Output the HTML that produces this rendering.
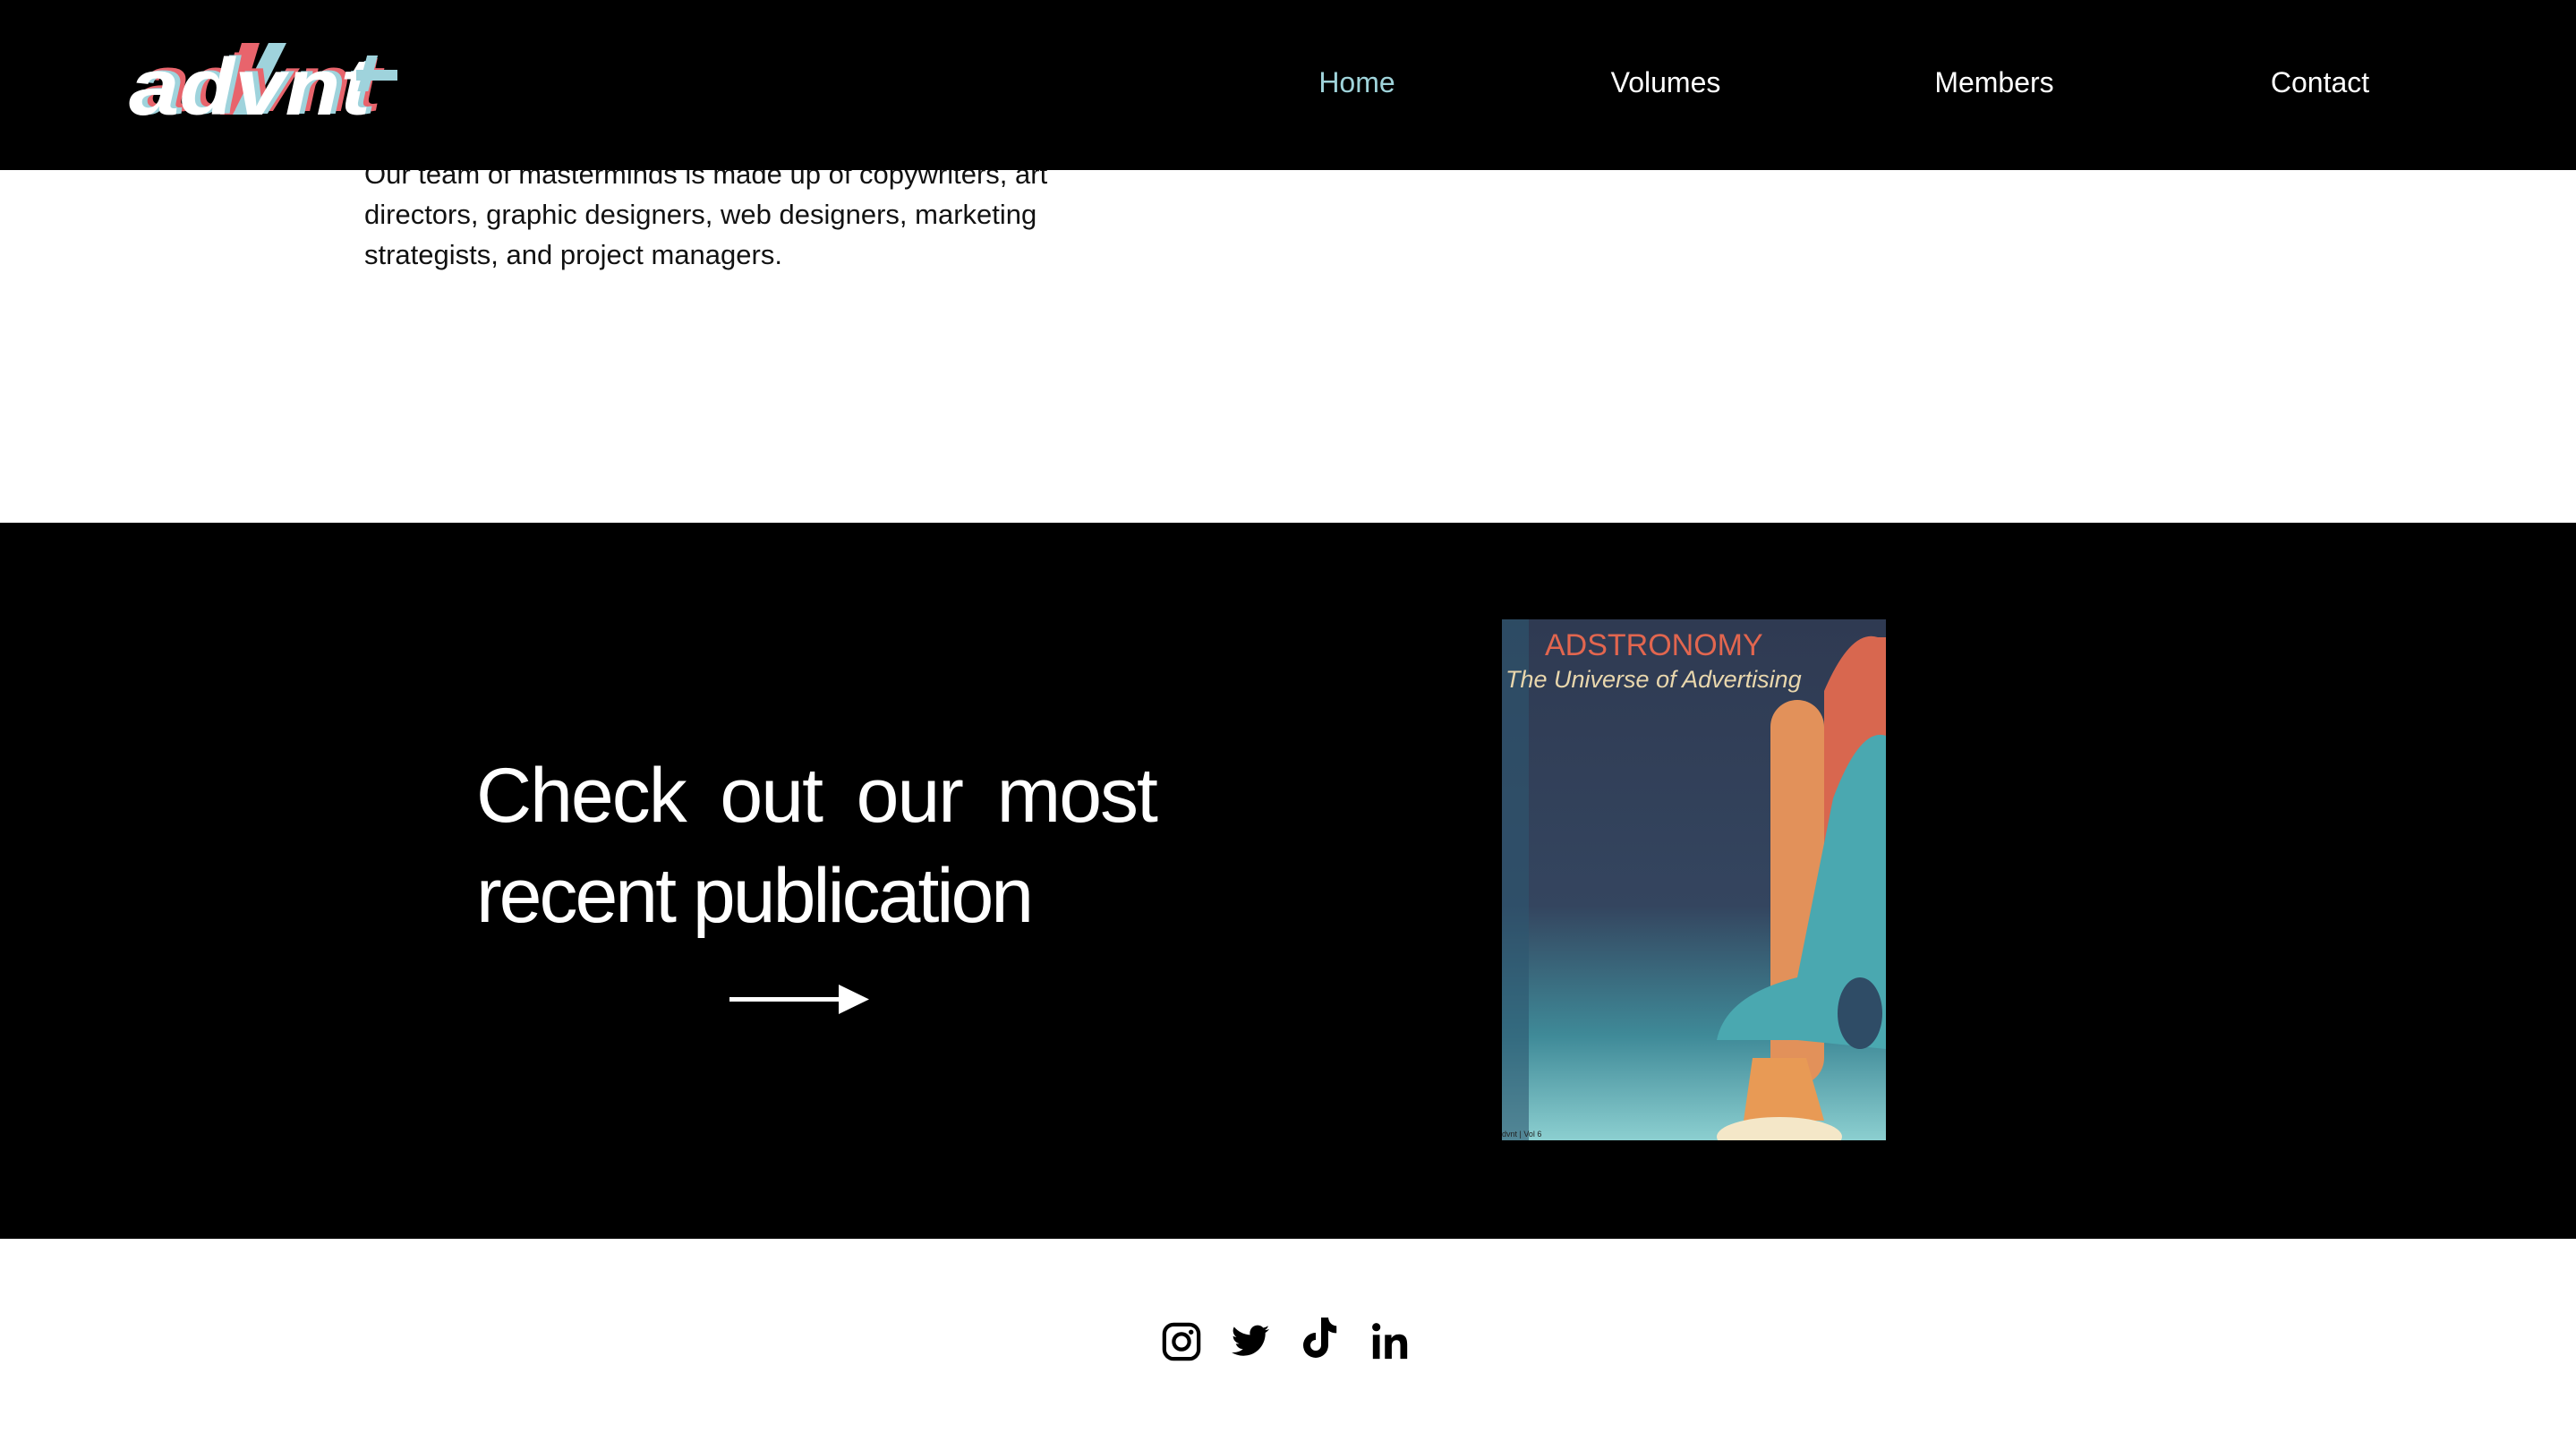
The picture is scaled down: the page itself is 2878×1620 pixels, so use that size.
<!DOCTYPE html>
<html><head><meta charset="utf-8"><style>
*{margin:0;padding:0;box-sizing:border-box}
body{width:2878px;height:1620px;background:#fff;position:relative;overflow:hidden;font-family:"Liberation Sans",sans-serif}
.hdr{position:absolute;left:0;top:0;width:2878px;height:190px;background:#000;z-index:2}
.nav{position:absolute;top:74px;font-size:32px;color:#fff;transform:translateX(-50%);white-space:nowrap}
.txt{position:absolute;left:407px;top:172px;width:840px;font-size:31px;line-height:45px;color:#111;letter-spacing:0px}
.blk{position:absolute;left:0;top:584px;width:2878px;height:800px;background:#000}
.h{position:absolute;left:532px;width:760px;color:#fff;font-size:86px;letter-spacing:-2px;white-space:nowrap}
</style></head><body>
<div class="txt">Our team of masterminds is made up of copywriters, art directors, graphic designers, web designers, marketing strategists, and project managers.</div>
<div class="hdr">
<svg style="position:absolute;left:140px;top:40px" width="320" height="100" viewBox="0 0 320 100">
<polygon points="130,8 150,8 126,88 106,88" fill="#e8646c"/>
<polygon points="160,8 180,8 140,88 120,88" fill="#9fd3dc"/>
<g font-family="Liberation Sans" font-weight="bold" font-style="italic" font-size="90">
<text x="16" y="84" fill="#e8646c" textLength="270" lengthAdjust="spacingAndGlyphs">advnt</text>
<text x="10" y="87" fill="#9fd3dc" textLength="270" lengthAdjust="spacingAndGlyphs">advnt</text>
<text x="4" y="88" fill="#fff" textLength="270" lengthAdjust="spacingAndGlyphs">advnt</text>
</g>
<rect x="258" y="38" width="46" height="12" fill="#9fd3dc"/>
<rect x="276" y="22" width="12" height="40" fill="#9fd3dc" transform="skewX(-15)"/>
</svg>
<div class="nav" style="left:1516px;color:#9fd3da">Home</div>
<div class="nav" style="left:1861px">Volumes</div>
<div class="nav" style="left:2228px">Members</div>
<div class="nav" style="left:2592px">Contact</div>
</div>
<div class="blk"></div>
<div class="h" style="top:840px;display:flex;justify-content:space-between"><span>Check</span><span>out</span><span>our</span><span>most</span></div>
<div class="h" style="top:952px;letter-spacing:-3px">recent publication</div>
<svg style="position:absolute;left:815px;top:1096px" width="160" height="42"><rect x="0" y="18" width="130" height="5" fill="#fff"/><polygon points="122,4 156,20.5 122,37" fill="#fff"/></svg>
<svg style="position:absolute;left:1678px;top:692px" width="429" height="582" viewBox="0 0 429 582">
<defs>
<linearGradient id="bg" x1="0" y1="0" x2="0" y2="1"><stop offset="0" stop-color="#2f3a52"/><stop offset=".55" stop-color="#34455f"/><stop offset=".8" stop-color="#3f8a98"/><stop offset="1" stop-color="#8ccfd0"/></linearGradient>
</defs>
<rect width="429" height="582" fill="url(#bg)"/>
<rect x="0" width="30" height="582" fill="#2d5770" opacity=".6"/>
<path d="M360 80 Q390 10 420 20 L429 20 L429 300 L360 300Z" fill="#d8674f"/>
<rect x="300" y="90" width="60" height="430" rx="30" fill="#e2915a"/>
<path d="M370 200 Q400 120 429 130 L429 480 L330 470 L240 470 Q250 420 330 400Z" fill="#4aa8b0"/>
<ellipse cx="400" cy="440" rx="25" ry="40" fill="#2f4c66"/>
<path d="M280 490 L340 490 L360 560 L270 560Z" fill="#e89a55"/>
<ellipse cx="310" cy="578" rx="70" ry="22" fill="#f4e7c8"/>
<text x="48" y="40" font-size="34" fill="#e2664f" font-family="Liberation Sans">ADSTRONOMY</text>
<text x="4" y="76" font-size="27" font-style="italic" fill="#e9d7ad" font-family="Liberation Sans">The Universe of Advertising</text>
<text x="0" y="578" font-size="9" fill="#222">dvnt | Vol 6</text>
</svg>
<svg style="position:absolute;left:1297px;top:1476px" width="46" height="46" viewBox="0 0 24 24"><rect x="2" y="2" width="20" height="20" rx="5.5" fill="none" stroke="#000" stroke-width="2.2"/><circle cx="12" cy="12" r="4.5" fill="none" stroke="#000" stroke-width="2.2"/><circle cx="17.6" cy="6.4" r="1.4"/></svg>
<svg style="position:absolute;left:1374px;top:1476px" width="46" height="46" viewBox="0 0 24 24"><path d="M23 4.6c-.8.4-1.7.6-2.6.7.9-.6 1.6-1.4 2-2.5-.9.5-1.900.9-2.9 1.1a4.5 4.5 0 0 0-7.7 4.1C8 7.8 4.7 6 2.5 3.300a4.5 4.5 0 0 0 1.4 6c-.7 0-1.4-.2-2-.6 0 2.2 1.6 4 3.6 4.4-.7.2-1.4.2-2 .1.6 1.8 2.2 3.1 4.2 3.1A9 9 0 0 1 1 18.2 12.8 12.8 0 0 0 7.9 20.2c8.3 0 12.8-6.9 12.8-12.8v-.6c.9-.6 1.7-1.4 2.3-2.2z"/></svg>
<svg style="position:absolute;left:1450px;top:1470px" width="48" height="52" viewBox="0 0 24 26"><path d="M13 1h4c.3 2.8 2 4.5 4.6 4.7v4c-1.7 0-3.2-.5-4.6-1.4v8.2a7 7 0 1 1-7-7v4a3 3 0 1 0 3 3z"/></svg>
<svg style="position:absolute;left:1530px;top:1476px" width="46" height="46" viewBox="0 0 24 24"><circle cx="4" cy="3.5" r="2.4"/><rect x="2" y="8" width="4" height="14"/><path d="M9 8h3.8v2c.8-1.4 2.4-2.3 4.4-2.3 3.6 0 4.8 2.3 4.800 5.8V22h-4v-7.6c0-1.9-.4-3.3-2.2-3.3s-2.8 1.3-2.8 3.4V22H9z"/></svg>
</body></html>
